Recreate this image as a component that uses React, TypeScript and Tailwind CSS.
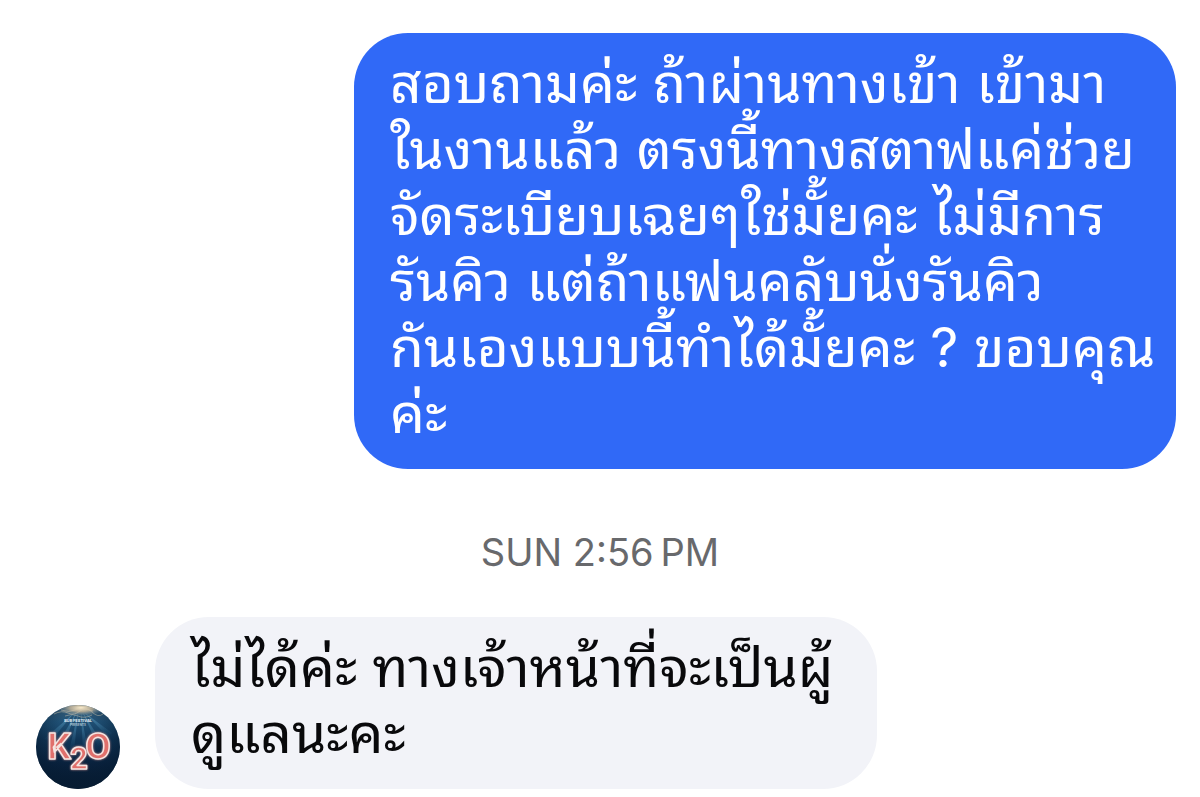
const question = [
  "สอบถามค่ะ ถ้าผ่านทางเข้า เข้ามา",
  "ในงานแล้ว ตรงนี้ทางสตาฟแค่ช่วย",
  "จัดระเบียบเฉยๆใช่มั้ยคะ ไม่มีการ",
  "รันคิว แต่ถ้าแฟนคลับนั่งรันคิว",
  "กันเองแบบนี้ทำได้มั้ยคะ ? ขอบคุณ",
  "ค่ะ",
];

const answer = ["ไม่ได้ค่ะ ทางเจ้าหน้าที่จะเป็นผู้", "ดูแลนะคะ"];

function Lines({ lines }: { lines: string[] }) {
  return (
    <p>
      {lines.map((line) => (
        <span key={line} className="block whitespace-nowrap">
          {line}
        </span>
      ))}
    </p>
  );
}

function NeonLetter({ x, y, size, children }: { x: number; y: number; size: number; children: string }) {
  return (
    <text
      x={x}
      y={y}
      fontSize={size}
      textAnchor="middle"
      fill="#e0706c"
      stroke="#f5e6e3"
      strokeWidth="1.5"
      strokeLinejoin="round"
      className="font-['Roboto',sans-serif] font-bold [filter:drop-shadow(0_0_1px_#c98f8f)]"
    >
      {children}
    </text>
  );
}

function Avatar() {
  return (
    <svg viewBox="0 0 84 84" className="size-[84px] shrink-0" role="img" aria-label="K2O">
      <defs>
        <clipPath id="disc">
          <circle cx="42" cy="42" r="42" />
        </clipPath>
        <linearGradient id="sea" x1="0" y1="0" x2="0" y2="1">
          <stop offset="0" stopColor="#3d6078" />
          <stop offset="0.2" stopColor="#1f5075" />
          <stop offset="0.42" stopColor="#103556" />
          <stop offset="0.7" stopColor="#0a2340" />
          <stop offset="1" stopColor="#06182c" />
        </linearGradient>
        <radialGradient id="edge" cx="0.5" cy="0.35" r="0.65">
          <stop offset="0.4" stopColor="#061c33" stopOpacity="0" />
          <stop offset="1" stopColor="#061c33" stopOpacity="0.8" />
        </radialGradient>
        <radialGradient id="sun">
          <stop offset="0" stopColor="#fff0cf" />
          <stop offset="0.45" stopColor="#cdbb9d" stopOpacity="0.8" />
          <stop offset="1" stopColor="#7e98a3" stopOpacity="0" />
        </radialGradient>
        <linearGradient id="ray" x1="0" y1="0" x2="0" y2="1">
          <stop offset="0" stopColor="#7cc0e0" stopOpacity="0.5" />
          <stop offset="1" stopColor="#4a9ac8" stopOpacity="0" />
        </linearGradient>
      </defs>
      <g clipPath="url(#disc)">
        <rect width="84" height="84" fill="url(#sea)" />
        <g fill="url(#ray)">
          <path d="M38 8 8 34l6 3Z" />
          <path d="M40 8 20 42l6 2Z" />
          <path d="M42 8 33 46h5Z" />
          <path d="M45 8 47 46h5Z" />
          <path d="M47 8 62 42l5-3Z" />
          <path d="M49 8 72 32l4-4Z" />
        </g>
        <rect width="84" height="84" fill="url(#edge)" />
        <ellipse cx="45" cy="3" rx="24" ry="8" fill="url(#sun)" />
        <path
          d="M18 9q8-4 14-1t12-2 12 1 11 2M25 5q8 3 14 0t18 1M29 11q7-3 13 0t14-1"
          fill="none"
          stroke="#d6c9b0"
          strokeOpacity="0.45"
        />
      </g>
      <g textAnchor="middle" fill="#e8f2f8" className="font-['Inter',sans-serif] font-bold">
        <text x="42" y="17" fontSize="4">SUB FESTIVAL</text>
        <text x="42" y="21" fontSize="3" fillOpacity="0.7">PRESENTS</text>
      </g>
      <NeonLetter x={23} y={54} size={37}>K</NeonLetter>
      <NeonLetter x={62} y={54} size={37}>O</NeonLetter>
      <NeonLetter x={43} y={64} size={31}>2</NeonLetter>
    </svg>
  );
}

export default function App() {
  return (
    <main className="flex min-h-screen flex-col bg-white pt-[33px] pr-6 pb-2 pl-9 font-['Inter','Noto_Sans_Thai_Looped',sans-serif] text-[55px] leading-[66px]">
      <article className="w-[822px] max-w-full self-end rounded-[54px] bg-[#3069f7] px-9 pt-[17px] pb-[23px] text-white">
        <Lines lines={question} />
      </article>
      <time className="-mr-6 -ml-9 mt-[58px] text-center text-[38px] leading-[50px] text-[#68696c]">
        SUN 2:56{"\u2009"}PM
      </time>
      <div className="mt-10 flex items-end gap-[35px]">
        <Avatar />
        <article className="w-[722px] rounded-[54px] bg-[#f2f3f8] px-9 pt-[17px] pb-[23px] text-[#09090b]">
          <Lines lines={answer} />
        </article>
      </div>
    </main>
  );
}
